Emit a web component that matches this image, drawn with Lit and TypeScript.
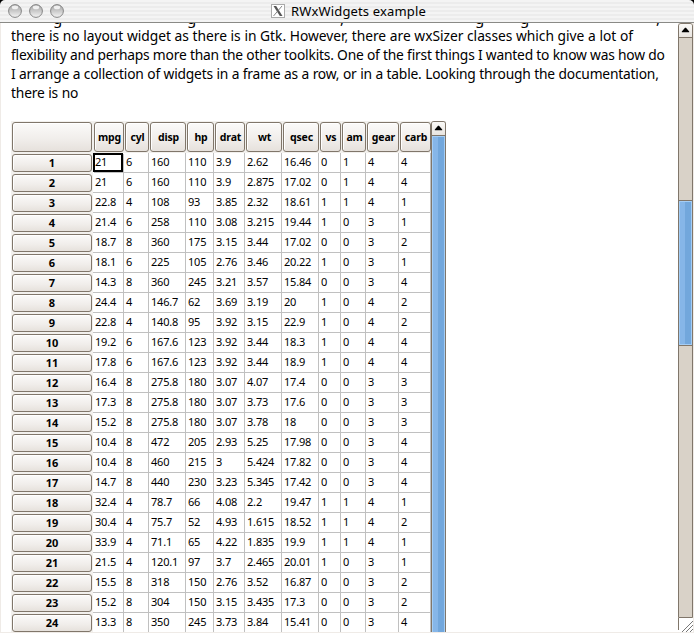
import { LitElement, html, css, svg } from "lit";
import { customElement } from "lit/decorators.js";
import { classMap } from "lit/directives/class-map.js";

const columns = ["mpg", "cyl", "disp", "hp", "drat", "wt", "qsec", "vs", "am", "gear", "carb"];

const rows = `21 6 160 110 3.9 2.62 16.46 0 1 4 4
21 6 160 110 3.9 2.875 17.02 0 1 4 4
22.8 4 108 93 3.85 2.32 18.61 1 1 4 1
21.4 6 258 110 3.08 3.215 19.44 1 0 3 1
18.7 8 360 175 3.15 3.44 17.02 0 0 3 2
18.1 6 225 105 2.76 3.46 20.22 1 0 3 1
14.3 8 360 245 3.21 3.57 15.84 0 0 3 4
24.4 4 146.7 62 3.69 3.19 20 1 0 4 2
22.8 4 140.8 95 3.92 3.15 22.9 1 0 4 2
19.2 6 167.6 123 3.92 3.44 18.3 1 0 4 4
17.8 6 167.6 123 3.92 3.44 18.9 1 0 4 4
16.4 8 275.8 180 3.07 4.07 17.4 0 0 3 3
17.3 8 275.8 180 3.07 3.73 17.6 0 0 3 3
15.2 8 275.8 180 3.07 3.78 18 0 0 3 3
10.4 8 472 205 2.93 5.25 17.98 0 0 3 4
10.4 8 460 215 3 5.424 17.82 0 0 3 4
14.7 8 440 230 3.23 5.345 17.42 0 0 3 4
32.4 4 78.7 66 4.08 2.2 19.47 1 1 4 1
30.4 4 75.7 52 4.93 1.615 18.52 1 1 4 2
33.9 4 71.1 65 4.22 1.835 19.9 1 1 4 1
21.5 4 120.1 97 3.7 2.465 20.01 1 0 3 1
15.5 8 318 150 2.76 3.52 16.87 0 0 3 2
15.2 8 304 150 3.15 3.435 17.3 0 0 3 2
13.3 8 350 245 3.73 3.84 15.41 0 0 3 4`
  .split("\n")
  .map((line) => line.split(" "));

@customElement("data-grid")
class DataGrid extends LitElement {
  static styles = css`
    :host {
      display: grid;
      grid-template-columns: 82px 31px 25px 37px 28px 31px 37px 37px 22px 25px 33px 32px;
      grid-template-rows: 32px;
      grid-auto-rows: 20px;
      font: 11px/20px "Noto Sans", sans-serif;
      color: #000;
    }
    .label {
      background: #f2f0ed;
      padding: 1px 0 1px 1px;
      display: flex;
    }
    .rowlabel {
      padding: 1px 1px 1px 1px;
    }
    .corner {
      padding-right: 1px;
    }
    .button {
      flex: 1;
      min-width: 0;
      box-sizing: border-box;
      border: 1px solid #80766a;
      border-radius: 3px;
      background: linear-gradient(#fbfaf9, #f0edea 60%, #e6e1dc);
      box-shadow: inset 1px 1px #fff;
      display: flex;
      align-items: center;
      justify-content: center;
      font-weight: 700;
      line-height: 14px;
      white-space: nowrap;
    }
    .head {
      font-size: 10.5px;
      letter-spacing: -0.15px;
      padding-left: 1px;
    }
    .cell {
      border-right: 1px solid #c0c0c0;
      border-bottom: 1px solid #c0c0c0;
      background: #fff;
      padding-left: 2px;
      line-height: 17px;
      letter-spacing: -0.18px;
      white-space: nowrap;
    }
    .selected {
      border: 2px solid #000;
      margin: 0 1px 1px 0;
      box-shadow: 1px 1px #c0c0c0;
      padding-left: 0;
      line-height: 14px;
    }
  `;
  render() {
    return html`
      <div class="label corner"><div class="button"></div></div>
      ${columns.map((c) => html`<div class="label"><div class="button head">${c}</div></div>`)}
      ${rows.map(
        (r, i) => html`
          <div class="label rowlabel"><div class="button">${i + 1}</div></div>
          ${r.map(
            (v, j) => html`<div class=${classMap({ cell: true, selected: i === 0 && j === 0 })}>${v}</div>`
          )}
        `
      )}
    `;
  }
}

const arrow = svg`<path d="M3 9v-1l3.5-4h1l3.5 4v1z" fill="#000"/>`;

@customElement("app-root")
class AppRoot extends LitElement {
  static styles = css`
    :host {
      display: flex;
      flex-direction: column;
      width: 694px;
      height: 633px;
      overflow: hidden;
      background: #000;
      font-family: "Noto Sans", sans-serif;
      color: #000;
    }
    .title {
      height: 23px;
      box-sizing: border-box;
      flex: none;
      border-bottom: 1px solid #8a8a86;
      border-radius: 5px 5px 0 0;
      background: repeating-linear-gradient(#f4f4f4 0 2px, #ececec 2px 4px);
      display: grid;
      grid-template-columns: 271px 1fr;
      align-items: center;
    }
    .lights {
      display: flex;
      gap: 7px;
      padding-left: 8px;
    }
    .lights svg {
      display: block;
    }
    .caption {
      display: flex;
      align-items: center;
      gap: 6px;
      font-size: 13px;
      line-height: 20px;
      letter-spacing: 0.15px;
    }
    .body {
      flex: 1;
      min-height: 0;
      display: flex;
      background: #efebe7;
      padding: 0 1px 1px 1px;
    }
    .view {
      width: 677px;
      flex: none;
      overflow: hidden;
      background: #fff;
      box-sizing: border-box;
      padding-left: 10px;
    }
    .clipped {
      display: flex;
      height: 3px;
      align-items: flex-end;
      font-size: 15px;
      line-height: 20px;
    }
    .clipped span {
      margin-bottom: -2px;
    }
    .w1 { width: 134px; padding-left: 42px; }
    .w2 { width: 153px; }
    .w3 { width: 135px; }
    .w4 { width: 45px; }
    .w5 { width: 136px; }
    .line {
      height: 19px;
      font-size: 15px;
      line-height: 19px;
      white-space: nowrap;
      text-align-last: justify;
      transform: scaleX(0.92);
      transform-origin: 0 0;
    }
    .l1 { width: 676px; letter-spacing: -0.04px; }
    .l2 { width: 709px; letter-spacing: -0.22px; }
    .l3 { width: 704px; letter-spacing: -0.22px; }
    .l4 { width: 73px; letter-spacing: -0.2px; }
    .table {
      display: flex;
      margin-top: 19px;
      height: 520px;
    }
    .bar {
      width: 14px;
      display: flex;
      flex-direction: column;
      box-sizing: border-box;
    }
    .outer {
      width: 15px;
      height: 595px;
      background: #d9d2c8;
      border: 1px solid #80766a;
      border-radius: 3px 3px 0 0;
    }
    .inner {
      width: 15px;
      height: 520px;
      border: 1px solid #80766a;
      border-bottom: 0;
      border-radius: 3px 3px 0 0;
    }
    .up {
      height: 13px;
      flex: none;
      border-bottom: 1px solid #80766a;
      background: linear-gradient(#faf9f7, #e9e5e0);
      border-radius: 2px 2px 0 0;
    }
    .up svg {
      display: block;
    }
    .thumb {
      box-sizing: border-box;
      border: 1px solid #a4cdf5;
      background: linear-gradient(90deg, #86b6e8 0 45%, #72a7dc 45%);
      flex: 1;
    }
    .outer .thumb {
      flex: none;
      height: 144px;
      margin-top: 163px;
      outline: 1px solid #80766a;
    }
    .side {
      width: 15px;
    }
    .grip {
      display: block;
    }
  `;

  light(n: number) {
    return html`<svg width="14" height="14" viewBox="0 0 14 14">
      <defs>
        <linearGradient id="g${n}" x1="0" y1="0" x2="0" y2="1">
          <stop offset="0" stop-color="#a4a4a4" />
          <stop offset=".5" stop-color="#cacaca" />
          <stop offset="1" stop-color="#f5f5f5" />
        </linearGradient>
      </defs>
      <circle cx="7" cy="7" r="6.4" fill="url(#g${n})" stroke="#858585" stroke-width="1" />
      <ellipse cx="7" cy="3.4" rx="3.2" ry="1.8" fill="#fff" opacity=".8" />
    </svg>`;
  }

  render() {
    return html`
      <div class="title">
        <div class="lights">${[1, 2, 3].map((n) => this.light(n))}</div>
        <div class="caption">
          <svg width="14" height="14" viewBox="0 0 14 14">
            <rect x=".5" y=".5" width="13" height="13" fill="#fff" stroke="#aaa" />
            <path d="M2.5 2h2.7L11.5 12H8.8z" fill="#555" />
            <path d="M11 2L2.5 12" stroke="#777" stroke-width=".9" />
          </svg>
          <span>RWxWidgets example</span>
        </div>
      </div>
      <div class="body">
        <div class="view">
          <div class="clipped">
            <span class="w1">g</span><span class="w2">g</span><span class="w3">,</span
            ><span class="w4">g</span><span class="w5">g</span><span>,</span>
          </div>
          <div class="line l1">there is no layout widget as there is in Gtk. However, there are wxSizer classes which give a lot of</div>
          <div class="line l2">flexibility and perhaps more than the other toolkits. One of the first things I wanted to know was how do</div>
          <div class="line l3">I arrange a collection of widgets in a frame as a row, or in a table. Looking through the documentation,</div>
          <div class="line l4">there is no</div>
          <div class="table">
            <data-grid></data-grid>
            <div class="bar inner">
              <div class="up"><svg width="13" height="12" viewBox="0 0 14 13">${arrow}</svg></div>
              <div class="thumb"></div>
            </div>
          </div>
        </div>
        <div class="side">
          <div class="bar outer">
            <div class="up"><svg width="13" height="12" viewBox="0 0 14 13">${arrow}</svg></div>
            <div class="thumb"></div>
          </div>
          <svg class="grip" width="15" height="14" viewBox="0 0 15 14">
            <path d="M0 0h15v14H0z" fill="#fff" />
            <path d="M.5 0v12" stroke="#80766a" />
            <path d="M4 14L15 3M8 14l7-7M12 14l3-3" stroke="#777" stroke-width="1" fill="none" />
          </svg>
        </div>
      </div>
    `;
  }
}
